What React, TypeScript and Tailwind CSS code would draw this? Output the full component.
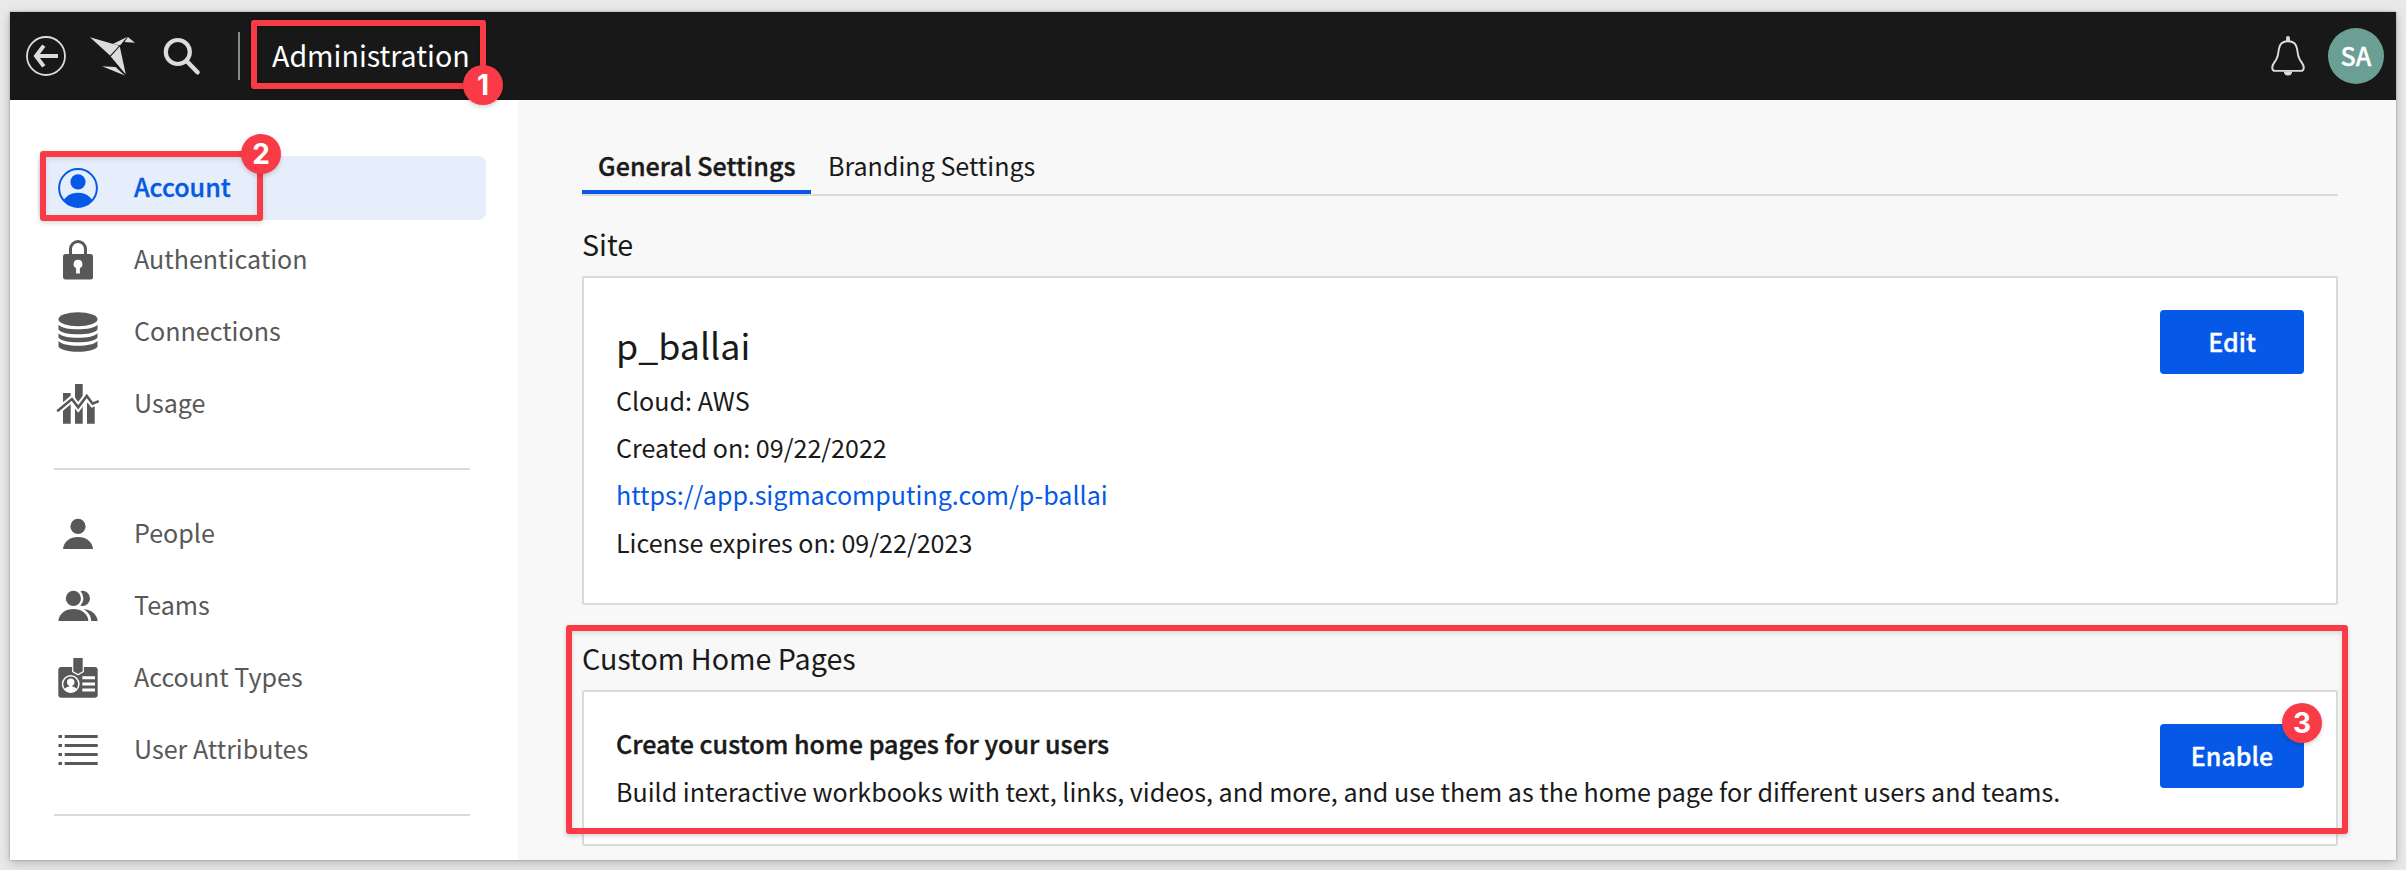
import type { ReactNode } from "react";

function BackIcon() {
  return (
    <svg width="40" height="40" viewBox="0 0 40 40" fill="none" stroke="#dcdcdc">
      <circle cx="20" cy="20" r="19" strokeWidth="1.8" />
      <path d="M17.8 9.6 10 20l7.8 10.4M10 20h22" strokeWidth="4" />
    </svg>
  );
}

function BirdLogo() {
  return (
    <svg width="50" height="40" viewBox="0 0 50 40" fill="#dcdcdc">
      <path d="M4 1.2 33.2 9.8 24 19.600Z" />
      <path d="M26.200 8.300 41 .9 34.200 9.200Z" />
      <path d="M41.900 1 49 6.700 38.600 5.900Z" />
      <path d="M33.800 10.600 24.700 20.500 39.800 38.400Z" />
      <path d="M16 30.300 29.600 30.900 38.800 39.500Z" />
    </svg>
  );
}

function SearchIcon() {
  return (
    <svg width="42" height="40" viewBox="0 0 42 40" fill="none" stroke="#dcdcdc">
      <circle cx="19.8" cy="16" r="12" strokeWidth="4.2" />
      <path d="m28.6 25 10.9 11.3" strokeWidth="4.4" strokeLinecap="round" />
    </svg>
  );
}

function BellIcon() {
  return (
    <svg width="40" height="40" viewBox="0 0 40 40" fill="none">
      <path
        d="M20 5.200c-5 0-8.600 3-9.200 8.200-.4 3.800-.6 6.600-2.400 9.800-1.600 2.800-4.200 5.400-4.200 8.200 0 2.400 1.100 3.500 3.100 3.500h25.400c2 0 3.100-1.100 3.100-3.500 0-2.800-2.600-5.400-4.200-8.200-1.800-3.200-2-6-2.400-9.800C28.600 8.200 25 5.200 20 5.200Z"
        stroke="#dcdcdc"
        strokeWidth="1.9"
      />
      <path d="M18.100 5.200V2a1.900 1.900 0 0 1 3.800 0v3.200ZM15.900 35.500h8.200a4.100 4.100 0 0 1-8.200 0Z" fill="#dcdcdc" />
    </svg>
  );
}

function Icon({ children }: { children: ReactNode }) {
  return (
    <svg width="40" height="40" viewBox="0 0 40 40" fill="currentColor" className="shrink-0 overflow-visible">
      {children}
    </svg>
  );
}

const accountIcon = (
  <Icon>
    <clipPath id="face">
      <circle cx="20" cy="20" r="19" />
    </clipPath>
    <circle cx="20" cy="20" r="18.900" fill="none" stroke="currentColor" strokeWidth="2" />
    <circle cx="20" cy="13.800" r="7.600" />
    <ellipse cx="20" cy="39" rx="16.500" ry="14.300" clipPath="url(#face)" />
  </Icon>
);

const lockIcon = (
  <Icon>
    <path d="M12.500 16V9a7.500 7.500 0 0 1 15 0v7" fill="none" stroke="currentColor" strokeWidth="3" />
    <rect x="5" y="14" width="30" height="25.600" rx="2.500" />
    <path d="M20 19.800a4.300 4.300 0 0 1 1.900 8.200v5.600h-3.800V28A4.300 4.300 0 0 1 20 19.800Z" fill="#fff" />
  </Icon>
);

const databaseIcon = (
  <Icon>
    <ellipse cx="20" cy="7.200" rx="19.500" ry="7" />
    <path d="M.5 12.700C3 15.800 11 17.300 20 17.300s17-1.500 19.500-4.600v4.800C37 20.800 29 22.300 20 22.300S3 20.800.5 17.500Z" />
    <path d="M.5 21.200C3 24.300 11 25.800 20 25.800s17-1.500 19.500-4.600v4.300C37 28.800 29 30.300 20 30.300S3 28.800.5 25.500Z" />
    <path d="M.5 29C3 32.200 11 33.700 20 33.700S37 32.200 39.500 29v5.700C37 38.200 29 39.700 20 39.700S3 38.200.5 34.700Z" />
  </Icon>
);

const usageIcon = (
  <Icon>
    <path d="M5 9h7.700v30.700H5zM17 0h7.700v39.700H17zM29 19h7.700v20.700H29z" />
    <path d="M-3 29.200 13.900 15 20.200 23.300 28.800 12 34.600 19.700 43 16.200" fill="none" stroke="#fff" strokeWidth="6.600" />
    <path d="M-.8 27.300 13.900 15 20.200 23.300 28.800 12 34.600 19.700 40.800 17.100" fill="none" stroke="currentColor" strokeWidth="2.600" />
  </Icon>
);

const personIcon = (
  <Icon>
    <circle cx="20" cy="12.400" r="7.600" />
    <path d="M5 35C5.600 27.600 12 23 20 23s14.400 4.600 15 12Z" />
  </Icon>
);

const teamIcon = (
  <Icon>
    <circle cx="24.400" cy="12.400" r="7.600" />
    <circle cx="15.400" cy="12.400" r="10" fill="#fff" />
    <circle cx="15.400" cy="12.400" r="7.600" />
    <path d="M.4 35C1 27.600 7.400 23 15.400 23s14.400 4.600 15 12Z" />
    <path d="M25.500 23.200C33.500 23.500 39 28.200 39.700 35H33.200C33 30 30.500 26 25.500 23.200Z" />
  </Icon>
);

const badgeIcon = (
  <Icon>
    <rect x=".3" y="9" width="39.400" height="30.700" rx="3" />
    <path d="M15.300 0h9.400v13.200L20 16l-4.700-2.800Z" stroke="#fff" strokeWidth="2.400" />
    <path d="M15.300 0h9.400v13.200L20 16l-4.700-2.800Z" />
    <circle cx="12.700" cy="26" r="8.200" fill="none" stroke="#fff" strokeWidth="1.500" />
    <circle cx="12.700" cy="24.200" r="3.700" fill="#fff" />
    <path d="M11.200 26h3v2.600c2.800.5 4.200 1.700 4.800 3.200a8.600 8.600 0 0 1-12.600 0c.6-1.500 2-2.700 4.800-3.200Z" fill="#fff" />
    <path d="M24.300 18.300H37v3H24.300zM24.300 24.400H37v3H24.300zM24.300 30.500H37v3H24.300z" fill="#fff" />
  </Icon>
);

const listIcon = (
  <Icon>
    <path d="M.5 5H4v3H.5zM.5 14H4v3H.5zM.5 23H4v3H.5zM.5 32H4v3H.5z" />
    <path d="M6.700 5h33v3h-33zM6.700 14h33v3h-33zM6.700 23h33v3h-33zM6.700 32h33v3h-33z" />
  </Icon>
);

function Step({ n, className }: { n: number; className: string }) {
  return (
    <span
      className={`absolute z-20 flex size-10 items-center justify-center rounded-full bg-[#f83b47] font-['Inter',sans-serif] text-[28px] leading-none font-bold text-white shadow-[0_2px_4px_rgba(0,0,0,0.18)] ${className}`}
    >
      {n}
    </span>
  );
}

function Highlight({ className }: { className: string }) {
  return (
    <span
      className={`pointer-events-none absolute z-10 rounded-[3px] border-[6px] border-[#f83b47] shadow-[0_2px_5px_rgba(0,0,0,0.16),inset_0_2px_5px_rgba(0,0,0,0.12)] ${className}`}
    />
  );
}

function NavItem({ icon, label }: { icon: ReactNode; label: string }) {
  return (
    <a className="flex h-16 items-center gap-9 pl-5 text-[#585858]">
      {icon}
      <span className="pb-1">{label}</span>
    </a>
  );
}

function Button({ children }: { children: ReactNode }) {
  return (
    <button className="flex h-16 w-36 items-center justify-center rounded bg-[#0559e6] pb-0.5 font-medium text-white [-webkit-text-stroke:0.3px]">
      {children}
    </button>
  );
}

export default function App() {
  return (
    <div className="h-[870px] w-[2406px] overflow-hidden bg-[#e9e9e9] px-2.5 pt-3 font-['Noto_Sans_CJK_SC','Noto_Sans',sans-serif] text-[25.070px] leading-[40px] text-[#1a1a1a]">
      <div className="flex h-[848px] w-[2386px] flex-col bg-[#f8f8f8] shadow-[0_0_2px_rgba(0,0,0,0.3),0_3px_10px_rgba(0,0,0,0.22)]">
        <header className="flex h-[88px] shrink-0 items-center bg-[#181818] pr-3 pl-4">
          <BackIcon />
          <div className="ml-5">
            <BirdLogo />
          </div>
          <div className="ml-[22px]">
            <SearchIcon />
          </div>
          <div className="ml-[38px] h-12 w-0.5 bg-[#8a8a8a]" />
          <div className="relative mb-[3px] ml-[11px] flex h-[69px] w-[235px] items-center pl-[21px]">
            <Highlight className="inset-0" />
            <h1 className="text-[28.600px] text-white">Administration</h1>
            <Step n={1} className="-right-[17px] -bottom-4" />
          </div>
          <div className="ml-auto">
            <BellIcon />
          </div>
          <div className="ml-5 flex size-14 items-center justify-center rounded-full bg-[#6b9f94] pb-[3px] font-medium text-white [-webkit-text-stroke:0.3px]">
            SA
          </div>
        </header>

        <div className="flex min-h-0 flex-1">
          <aside className="w-[508px] shrink-0 bg-white pt-14 pr-8 pl-7">
            <nav className="flex flex-col gap-2">
              <a className="relative flex h-16 items-center gap-9 rounded-lg bg-[#e6edfb] pl-5 font-medium text-[#0559e6]">
                {accountIcon}
                <span className="pb-1 [-webkit-text-stroke:0.3px]">Account</span>
                <Highlight className="-top-[5px] left-[2px] h-[70px] w-[223px]" />
                <Step n={2} className="-top-[22px] left-[203px]" />
              </a>
              <NavItem icon={lockIcon} label="Authentication" />
              <NavItem icon={databaseIcon} label="Connections" />
              <NavItem icon={usageIcon} label="Usage" />
            </nav>
            <hr className="mx-4 my-8 border-t-2 border-[#dadada]" />
            <nav className="flex flex-col gap-2">
              <NavItem icon={personIcon} label="People" />
              <NavItem icon={teamIcon} label="Teams" />
              <NavItem icon={badgeIcon} label="Account Types" />
              <NavItem icon={listIcon} label="User Attributes" />
            </nav>
            <hr className="mx-4 mt-8 border-t-2 border-[#dadada]" />
          </aside>

          <main className="flex-1 pt-[45px] pr-[58px] pl-16">
            <div className="flex border-b-2 border-[#dadada]">
              <div className="w-[229px] border-b-4 border-[#0559e6] px-4 pb-[5px] font-medium tracking-[0.070px] whitespace-nowrap [-webkit-text-stroke:0.4px]">
                General Settings
              </div>
              <div className="px-[17px]">Branding Settings</div>
            </div>

            <h2 className="mt-7 mb-3 text-[28.650px]">Site</h2>
            <section className="flex h-[329px] items-start justify-between rounded-[2px] border-2 border-[#dadada] bg-white px-8">
              <div className="pt-[39px] leading-[47px]">
                <h3 className="mb-1.5 text-[35.800px] leading-[54px]">p_ballai</h3>
                <p>Cloud: AWS</p>
                <p>Created on: 09/22/2022</p>
                <p className="text-[#0559e6]">https://app.sigmacomputing.com/p-ballai</p>
                <p className="mt-px">License expires on: 09/22/2023</p>
              </div>
              <div className="mt-8">
                <Button>Edit</Button>
              </div>
            </section>

            <div className="relative mt-[33px]">
              <Highlight className="-top-[13px] -right-2.5 -left-4 h-[209px]" />
              <h2 className="mb-3 text-[28.650px]">Custom Home Pages</h2>
              <section className="flex h-[156px] items-start justify-between rounded-[2px] border-2 border-[#dadada] bg-white px-8">
                <div className="pt-[27px] leading-[48px]">
                  <p className="font-medium tracking-[0.040px] [-webkit-text-stroke:0.4px]">
                    Create custom home pages for your users
                  </p>
                  <p>
                    Build interactive workbooks with text, links, videos, and more, and use them as the home page for
                    different users and teams.
                  </p>
                </div>
                <div className="relative mt-8">
                  <Button>Enable</Button>
                  <Step n={3} className="-top-[21px] -right-[18px]" />
                </div>
              </section>
            </div>
          </main>
        </div>
      </div>
    </div>
  );
}
